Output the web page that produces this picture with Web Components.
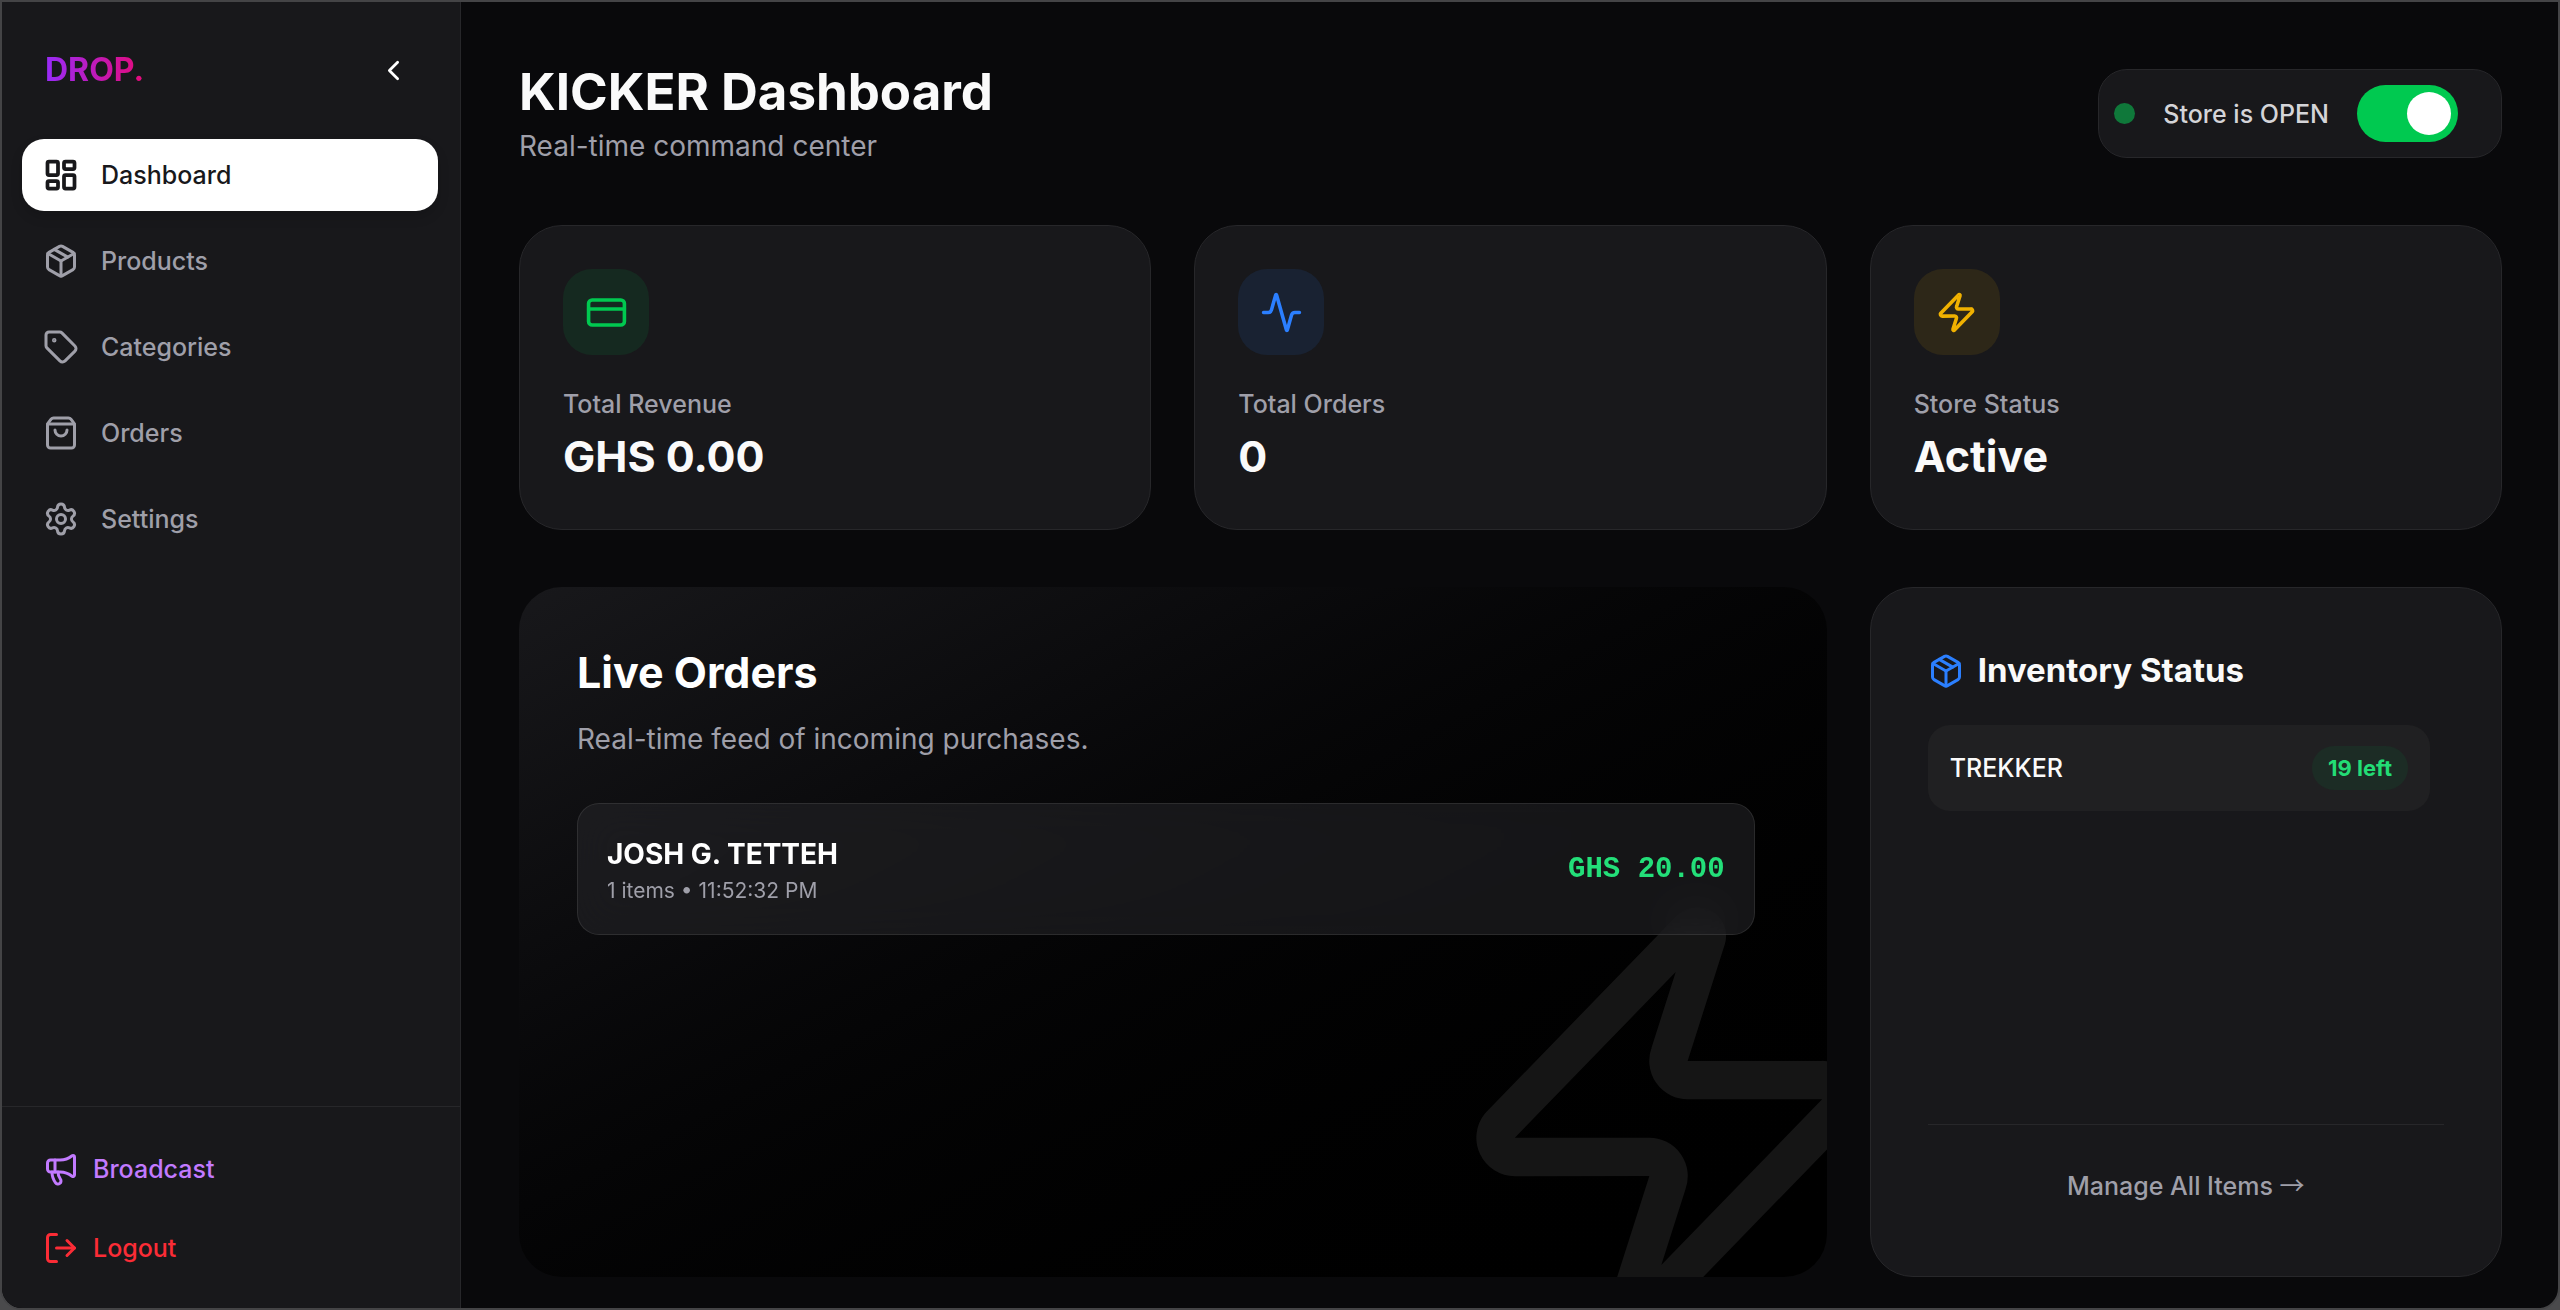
<!DOCTYPE html>
<html lang="en">
<head>
<meta charset="utf-8">
<meta name="viewport" content="width=device-width, initial-scale=1">
<title>KICKER Dashboard</title>
<style>
    :root {
        --bg: #09090b;
        --surface: #18181b;
        --line: #27272a;
        --text: #fafafa;
        --muted: #9f9fa9;
        --green: #00c950;
        --blue: #2b7fff;
        --yellow: #f0b100;
        --small: 21px;
        --base: 25px;
        --medium: 28px;
        --large: 43px;
    }

    body {
        margin: 0;
        background: #4a4a4c;
        color: var(--text);
        font-family: Inter, "Liberation Sans", sans-serif;
        font-size: var(--base);
    }
</style>
</head>
<body>
<dashboard-app></dashboard-app>

<script>
const icons = {
    dashboard: `<rect width="7" height="9" x="3" y="3" rx="1"/><rect width="7" height="5" x="14" y="3" rx="1"/><rect width="7" height="9" x="14" y="12" rx="1"/><rect width="7" height="5" x="3" y="16" rx="1"/>`,
    package: `<path d="M11 21.73a2 2 0 0 0 2 0l7-4A2 2 0 0 0 21 16V8a2 2 0 0 0-1-1.73l-7-4a2 2 0 0 0-2 0l-7 4A2 2 0 0 0 3 8v8a2 2 0 0 0 1 1.73z"/><path d="M12 22V12"/><path d="M3.29 7 12 12l8.71-5"/><path d="m7.5 4.27 9 5.15"/>`,
    tag: `<path d="M12.586 2.586A2 2 0 0 0 11.172 2H4a2 2 0 0 0-2 2v7.172a2 2 0 0 0 .586 1.414l8.704 8.704a2.426 2.426 0 0 0 3.42 0l6.58-6.58a2.426 2.426 0 0 0 0-3.42z"/><circle cx="7.5" cy="7.5" r=".5" fill="currentColor"/>`,
    bag: `<path d="M16 10a4 4 0 0 1-8 0"/><path d="M3.103 6.034h17.794"/><path d="M3.4 5.467a2 2 0 0 0-.4 1.2V20a2 2 0 0 0 2 2h14a2 2 0 0 0 2-2V6.667a2 2 0 0 0-.4-1.2l-2-2.667A2 2 0 0 0 17 2H7a2 2 0 0 0-1.6.8z"/>`,
    settings: `<path d="M9.671 4.136a2.34 2.34 0 0 1 4.659 0 2.34 2.34 0 0 0 3.319 1.915 2.34 2.34 0 0 1 2.33 4.033 2.34 2.34 0 0 0 0 3.831 2.34 2.34 0 0 1-2.33 4.033 2.34 2.34 0 0 0-3.319 1.915 2.34 2.34 0 0 1-4.659 0 2.34 2.34 0 0 0-3.32-1.915 2.34 2.34 0 0 1-2.33-4.033 2.34 2.34 0 0 0 0-3.831A2.34 2.34 0 0 1 6.35 6.051a2.34 2.34 0 0 0 3.319-1.915"/><circle cx="12" cy="12" r="3"/>`,
    megaphone: `<path d="M11 6a13 13 0 0 0 8.4-2.8A1 1 0 0 1 21 4v12a1 1 0 0 1-1.6.8A13 13 0 0 0 11 14H5a2 2 0 0 1-2-2V8a2 2 0 0 1 2-2z"/><path d="M6 14a12 12 0 0 0 2.4 7.2 2 2 0 0 0 3.2-2.4A8 8 0 0 1 10 14"/><path d="M8 6v8"/>`,
    logout: `<path d="m16 17 5-5-5-5"/><path d="M21 12H9"/><path d="M9 21H5a2 2 0 0 1-2-2V5a2 2 0 0 1 2-2h4"/>`,
    chevron: `<path d="m15 18-6-6 6-6"/>`,
    card: `<rect width="20" height="14" x="2" y="5" rx="2"/><path d="M2 10h20"/>`,
    activity: `<path d="M22 12h-2.48a2 2 0 0 0-1.93 1.46l-2.35 8.36a.25.25 0 0 1-.48 0L9.24 2.18a.25.25 0 0 0-.48 0l-2.35 8.36A2 2 0 0 1 4.49 12H2"/>`,
    zap: `<path d="M4 14a1 1 0 0 1-.78-1.63l9.9-10.2a.5.5 0 0 1 .86.46l-1.92 6.02A1 1 0 0 0 13 10h7a1 1 0 0 1 .78 1.63l-9.9 10.2a.5.5 0 0 1-.86-.46l1.92-6.02A1 1 0 0 0 11 14z"/>`,
};

class AppIcon extends HTMLElement {
    connectedCallback() {
        const shadow = this.attachShadow({ mode: "open" });
        shadow.innerHTML = `
            <style>
                :host { display: block; flex: none; width: 36px; height: 36px; }
                svg { display: block; width: 100%; height: 100%; stroke-width: var(--icon-stroke, 2); }
            </style>
            <svg viewBox="0 0 24 24" fill="none" stroke="currentColor" stroke-linecap="round" stroke-linejoin="round" aria-hidden="true">${icons[this.getAttribute("name")]}</svg>
        `;
    }
}

class NavLink extends HTMLElement {
    connectedCallback() {
        const shadow = this.attachShadow({ mode: "open" });
        shadow.innerHTML = `
            <style>
                :host { display: block; }

                a {
                    display: flex;
                    align-items: center;
                    gap: 22px;
                    height: 72px;
                    padding: 0 21px;
                    border-radius: 22px;
                    color: var(--muted);
                    font-weight: 500;
                    text-decoration: none;
                }

                :host([active]) a {
                    --icon-stroke: 2.5;
                    background: #fff;
                    color: var(--surface);
                    box-shadow: 0 6px 12px rgba(0, 0, 0, 0.15);
                }
            </style>
            <a href="#${this.getAttribute("icon")}"><app-icon name="${this.getAttribute("icon")}"></app-icon><slot></slot></a>
        `;
    }
}

class NavAction extends HTMLElement {
    connectedCallback() {
        const shadow = this.attachShadow({ mode: "open" });
        shadow.innerHTML = `
            <style>
                :host { display: block; }

                button {
                    display: flex;
                    align-items: center;
                    gap: 14px;
                    width: 100%;
                    height: 72px;
                    padding: 0 21px;
                    border: none;
                    border-radius: 22px;
                    background: none;
                    color: inherit;
                    font: inherit;
                    font-weight: 500;
                    cursor: pointer;
                }
            </style>
            <button type="button"><app-icon name="${this.getAttribute("icon")}"></app-icon><slot></slot></button>
        `;
    }
}

class SideBar extends HTMLElement {
    connectedCallback() {
        const shadow = this.attachShadow({ mode: "open" });
        shadow.innerHTML = `
            <style>
                :host {
                    display: flex;
                    flex-direction: column;
                    background: var(--surface);
                    border-right: 1px solid var(--line);
                }

                .top {
                    display: flex;
                    align-items: center;
                    justify-content: space-between;
                    padding: 43px 43px 44px;
                }

                .logo {
                    font-size: 32px;
                    line-height: 50px;
                    font-weight: 700;
                    background: linear-gradient(to right, #982bf8, #e60a79);
                    -webkit-background-clip: text;
                    background-clip: text;
                    color: transparent;
                }

                .collapse {
                    display: grid;
                    place-items: center;
                    width: 48px;
                    height: 50px;
                    padding: 0;
                    border: none;
                    background: none;
                    color: #fff;
                    cursor: pointer;
                }

                .collapse app-icon { width: 33px; height: 33px; }

                nav {
                    flex: 1;
                    display: flex;
                    flex-direction: column;
                    gap: 14px;
                    padding: 0 22px 0 20px;
                }

                .bottom {
                    display: flex;
                    flex-direction: column;
                    gap: 7px;
                    padding: 26px 22px 24px 20px;
                    border-top: 1px solid var(--line);
                }

                .broadcast { color: #c27aff; }
                .logout { color: #fb2c36; }
            </style>
            <div class="top">
                <span class="logo">DROP.</span>
                <button class="collapse" type="button" aria-label="Collapse sidebar"><app-icon name="chevron"></app-icon></button>
            </div>
            <nav>
                <nav-link icon="dashboard" active>Dashboard</nav-link>
                <nav-link icon="package">Products</nav-link>
                <nav-link icon="tag">Categories</nav-link>
                <nav-link icon="bag">Orders</nav-link>
                <nav-link icon="settings">Settings</nav-link>
            </nav>
            <div class="bottom">
                <nav-action class="broadcast" icon="megaphone">Broadcast</nav-action>
                <nav-action class="logout" icon="logout">Logout</nav-action>
            </div>
        `;
    }
}

class StoreToggle extends HTMLElement {
    connectedCallback() {
        const shadow = this.attachShadow({ mode: "open" });
        shadow.innerHTML = `
            <style>
                :host {
                    display: flex;
                    align-items: center;
                    gap: 28px;
                    padding: 15px 43px 15px 15px;
                    border: 1px solid var(--line);
                    border-radius: 29px;
                    background: var(--surface);
                }

                .dot {
                    width: 21px;
                    height: 21px;
                    border-radius: 50%;
                    background: #0f783a;
                }

                label { color: #d4d4d8; font-weight: 500; }

                input {
                    appearance: none;
                    box-sizing: border-box;
                    display: flex;
                    width: 101px;
                    height: 57px;
                    margin: 0;
                    padding: 7px;
                    border-radius: 29px;
                    background: #3f3f46;
                    cursor: pointer;
                }

                input::before {
                    content: "";
                    width: 44px;
                    height: 43px;
                    border-radius: 50%;
                    background: #fff;
                }

                input:checked { justify-content: flex-end; background: var(--green); }
            </style>
            <span class="dot"></span>
            <label for="open">Store is OPEN</label>
            <input type="checkbox" role="switch" id="open" checked>
        `;

        this.label = shadow.querySelector("label");
        this.input = shadow.querySelector("input");

        this.input.addEventListener("change", () => {
            this.label.textContent = this.input.checked ? "Store is OPEN" : "Store is CLOSED";
        });
    }
}

class StatCard extends HTMLElement {
    connectedCallback() {
        const shadow = this.attachShadow({ mode: "open" });
        shadow.innerHTML = `
            <style>
                :host {
                    display: block;
                    padding: 43px 43px 39px;
                    border: 1px solid var(--line);
                    border-radius: 43px;
                    background: var(--surface);
                }

                .tile {
                    display: grid;
                    place-items: center;
                    width: 86px;
                    height: 86px;
                    margin-bottom: 31px;
                    border-radius: 29px;
                    background: color-mix(in srgb, currentColor 10%, transparent);
                    color: var(--tint);
                }

                .tile app-icon { width: 43px; height: 43px; }
                .label { line-height: 36px; color: var(--muted); font-weight: 500; }
                .value { font-size: var(--large); line-height: 68px; font-weight: 700; }
            </style>
            <div class="tile"><app-icon name="${this.getAttribute("icon")}"></app-icon></div>
            <div class="label">${this.getAttribute("label")}</div>
            <div class="value"><slot></slot></div>
        `;
    }
}

class OrderRow extends HTMLElement {
    connectedCallback() {
        const shadow = this.attachShadow({ mode: "open" });
        shadow.innerHTML = `
            <style>
                :host {
                    display: flex;
                    align-items: center;
                    justify-content: space-between;
                    padding: 29px;
                    border: 1px solid rgba(255, 255, 255, 0.09);
                    border-radius: 22px;
                    background: rgba(39, 39, 42, 0.55);
                    backdrop-filter: blur(22px);
                }

                .name { font-size: var(--medium); line-height: 43px; font-weight: 700; color: #fff; }
                .meta { font-size: var(--small); line-height: 29px; color: var(--muted); }

                .amount {
                    font-family: "Liberation Mono", monospace;
                    font-size: 29px;
                    font-weight: 700;
                    color: #23df79;
                }
            </style>
            <div>
                <div class="name">${this.getAttribute("customer")}</div>
                <div class="meta"><slot></slot></div>
            </div>
            <div class="amount">${this.getAttribute("amount")}</div>
        `;
    }
}

class LiveOrders extends HTMLElement {
    connectedCallback() {
        const shadow = this.attachShadow({ mode: "open" });
        shadow.innerHTML = `
            <style>
                :host {
                    display: block;
                    position: relative;
                    overflow: hidden;
                    padding: 58px;
                    border-radius: 43px;
                    background: linear-gradient(to bottom right in oklab, #18181b, #000);
                }

                h2 { margin: 0 0 18px; font-size: var(--large); line-height: 54px; font-weight: 700; color: #fff; }
                p { margin: 0 0 42px; font-size: var(--medium); line-height: 44px; color: var(--muted); }
                .list { position: relative; padding-right: 14px; }

                /* oversized bolt bleeding out of the corner */
                .bolt {
                    position: absolute;
                    right: -72px;
                    bottom: -72px;
                    width: 461px;
                    height: 461px;
                    color: #151515;
                }
            </style>
            <app-icon class="bolt" name="zap"></app-icon>
            <h2>Live Orders</h2>
            <p>Real-time feed of incoming purchases.</p>
            <div class="list"><slot></slot></div>
        `;
    }
}

class StockRow extends HTMLElement {
    connectedCallback() {
        const shadow = this.attachShadow({ mode: "open" });
        shadow.innerHTML = `
            <style>
                :host {
                    display: flex;
                    align-items: center;
                    justify-content: space-between;
                    padding: 21px 22px;
                    border-radius: 22px;
                    background: #202022;
                    font-weight: 500;
                }

                .badge {
                    padding: 0 16px;
                    border-radius: 22px;
                    background: #1c2c25;
                    color: #23dc75;
                    font-size: 22px;
                    line-height: 44px;
                    font-weight: 700;
                }
            </style>
            <slot></slot>
            <span class="badge">${this.getAttribute("left")} left</span>
        `;
    }
}

class InventoryStatus extends HTMLElement {
    connectedCallback() {
        const shadow = this.attachShadow({ mode: "open" });
        shadow.innerHTML = `
            <style>
                :host {
                    display: flex;
                    flex-direction: column;
                    padding: 57px;
                    border: 1px solid var(--line);
                    border-radius: 43px;
                    background: var(--surface);
                }

                h3 {
                    display: flex;
                    align-items: center;
                    gap: 14px;
                    margin: 0 0 29px;
                    font-size: 33px;
                    line-height: 51px;
                    font-weight: 700;
                }

                h3 app-icon { color: var(--blue); }
                .list { flex: 1; padding-right: 14px; }
                footer { padding-top: 29px; border-top: 1px solid var(--line); text-align: center; }
                a { display: block; line-height: 65px; color: var(--muted); font-weight: 500; text-decoration: none; }
                .arrow { font-family: "Noto Sans CJK JP", sans-serif; font-weight: 400; line-height: 1; }
            </style>
            <h3><app-icon name="package"></app-icon>Inventory Status</h3>
            <div class="list"><slot></slot></div>
            <footer><a href="#items">Manage All Items <span class="arrow">→</span></a></footer>
        `;
    }
}

class DashboardApp extends HTMLElement {
    connectedCallback() {
        const shadow = this.attachShadow({ mode: "open" });
        shadow.innerHTML = `
            <style>
                :host {
                    box-sizing: border-box;
                    display: grid;
                    grid-template-columns: 459px 1fr;
                    min-height: 100vh;
                    overflow: hidden;
                    border: 2px solid #444446;
                    border-radius: 0 0 22px 22px;
                    background: var(--bg);
                }

                main {
                    display: flex;
                    flex-direction: column;
                    gap: 57px;
                    padding: 57px 56px 31px 58px;
                }

                header { display: flex; align-items: center; justify-content: space-between; }
                h1 { margin: 0; font-size: 51px; line-height: 65px; font-weight: 700; }
                header p { margin: 0; font-size: var(--medium); line-height: 44px; color: var(--muted); }

                .stats,
                .panels {
                    display: grid;
                    grid-template-columns: repeat(3, 1fr);
                    gap: 43px;
                }

                .panels { flex: 1; }
                live-orders { grid-column: span 2; }
                .revenue { --tint: var(--green); }
                .orders { --tint: var(--blue); }
                .status { --tint: var(--yellow); }
            </style>
            <side-bar></side-bar>
            <main>
                <header>
                    <div>
                        <h1>KICKER Dashboard</h1>
                        <p>Real-time command center</p>
                    </div>
                    <store-toggle></store-toggle>
                </header>
                <section class="stats">
                    <stat-card class="revenue" icon="card" label="Total Revenue">GHS 0.00</stat-card>
                    <stat-card class="orders" icon="activity" label="Total Orders">0</stat-card>
                    <stat-card class="status" icon="zap" label="Store Status">Active</stat-card>
                </section>
                <section class="panels">
                    <live-orders>
                        <order-row customer="JOSH G. TETTEH" amount="GHS 20.00">1 items • 11:52:32 PM</order-row>
                    </live-orders>
                    <inventory-status>
                        <stock-row left="19">TREKKER</stock-row>
                    </inventory-status>
                </section>
            </main>
        `;
    }
}

customElements.define("app-icon", AppIcon);
customElements.define("nav-link", NavLink);
customElements.define("nav-action", NavAction);
customElements.define("side-bar", SideBar);
customElements.define("store-toggle", StoreToggle);
customElements.define("stat-card", StatCard);
customElements.define("order-row", OrderRow);
customElements.define("live-orders", LiveOrders);
customElements.define("stock-row", StockRow);
customElements.define("inventory-status", InventoryStatus);
customElements.define("dashboard-app", DashboardApp);
</script>
</body>
</html>
